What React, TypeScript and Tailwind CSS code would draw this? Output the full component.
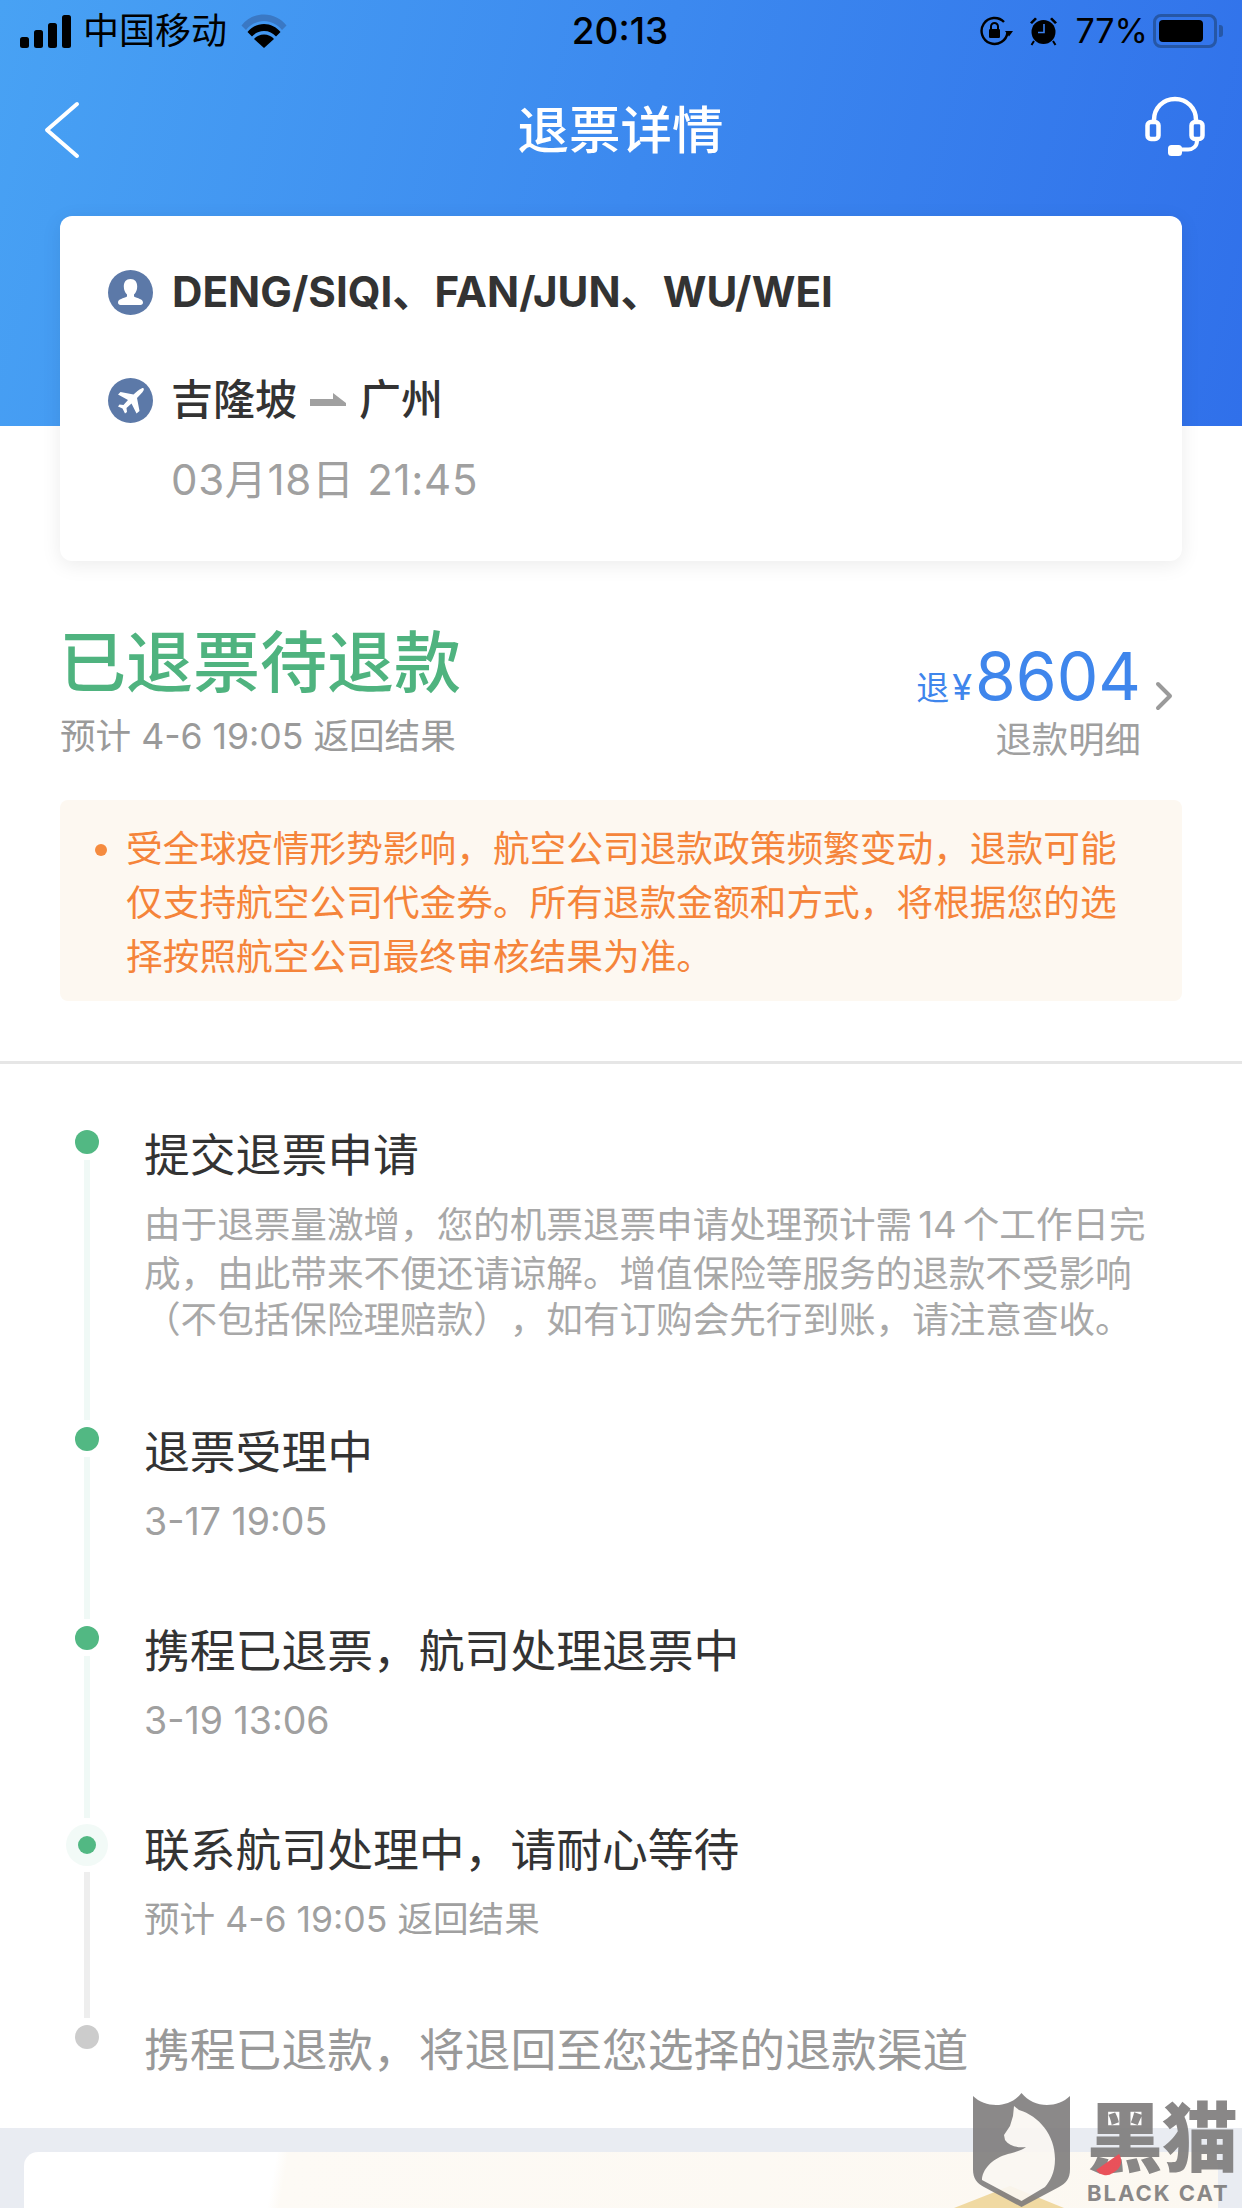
import React from "react";

const FONT = { fontFamily: '"Inter","Noto Sans CJK SC",sans-serif' };

function Signal() {
  return (
    <svg width="52" height="33" viewBox="0 0 52 33" className="shrink-0">
      <rect x="0" y="22" width="9" height="11" rx="2.5" fill="#000" />
      <rect x="14" y="15" width="9" height="18" rx="2.5" fill="#000" />
      <rect x="28" y="8" width="9" height="25" rx="2.5" fill="#000" />
      <rect x="42" y="0" width="9" height="33" rx="2.5" fill="#000" />
    </svg>
  );
}

function Wifi() {
  return (
    <svg width="46" height="34" viewBox="0 0 46 34" className="shrink-0">
      <path d="M0.5 11.5C6 4.5 14 0.5 23 0.5S40 4.5 45.5 11.5L41 16C36.5 10.5 30 7 23 7S9.5 10.5 5 16Z" fill="#3a78c4" />
      <path d="M6.5 18C10.5 13 16.5 10 23 10S35.5 13 39.5 18L35 22.5C32 19 27.8 17 23 17S14 19 11 22.5Z" fill="#000" />
      <path d="M13 25C15.5 22 19 20.5 23 20.5S30.5 22 33 25L23 34Z" fill="#000" />
    </svg>
  );
}

function RotationLock() {
  return (
    <svg width="34" height="30" viewBox="0 0 34 30" className="shrink-0">
      <path d="M27.5 16A13 13 0 1 1 24 5.5" fill="none" stroke="#000" strokeWidth="2.4" transform="translate(0,0.5)" />
      <path d="M25 15H33L29 20.5Z" fill="#000" />
      <rect x="9" y="13" width="11" height="9" rx="1.2" fill="#000" />
      <path d="M11 13V10.5a3.5 3.5 0 0 1 7 0V13" fill="none" stroke="#000" strokeWidth="2" />
    </svg>
  );
}

function Alarm() {
  return (
    <svg width="29" height="30" viewBox="0 0 29 30" className="shrink-0">
      <circle cx="14.5" cy="16" r="12" fill="#000" />
      <path d="M1 6.5L6 1.5 8 3 3 8ZM28 6.5L23 1.5 21 3 26 8Z" fill="#000" />
      <path d="M5 25L2.5 29M24 25L26.5 29" stroke="#000" strokeWidth="2" />
      <path d="M15 8V16.5H9" fill="none" stroke="#3a80ee" strokeWidth="1.6" />
    </svg>
  );
}

function Battery() {
  return (
    <div className="flex items-center shrink-0">
      <div className="w-[64px] h-[34px] rounded-[8px] border-[3px] border-[#2657a6] p-[3px] flex">
        <div className="w-[44px] h-full rounded-[4px] bg-black" />
      </div>
      <div className="w-[4px] h-[12px] ml-[2px] rounded-r-[3px] bg-[#2657a6]" />
    </div>
  );
}

function Headset() {
  return (
    <svg width="60" height="60" viewBox="0 0 60 60" className="shrink-0 -mt-[8px]">
      <path d="M9 26V24C9 12 18 3 30 3S51 12 51 24V26" fill="none" stroke="#fff" strokeWidth="4.5" />
      <rect x="2.5" y="26" width="11" height="17" rx="3.5" fill="none" stroke="#fff" strokeWidth="4.5" />
      <rect x="46.5" y="26" width="11" height="17" rx="3.5" fill="none" stroke="#fff" strokeWidth="4.5" />
      <path d="M52 43V45C52 50 48 53.5 43 53.5H30" fill="none" stroke="#fff" strokeWidth="4" />
      <rect x="23" y="49" width="14" height="11" rx="3.5" fill="#fff" />
    </svg>
  );
}

function PersonIcon() {
  return (
    <svg width="45" height="45" viewBox="0 0 45 45" className="shrink-0">
      <circle cx="22.5" cy="22.5" r="22.5" fill="#5c79a8" />
      <path d="M22.5 9C18 9 15.8 12 15.8 16.5C15.8 20 17 22.5 19 24.5V26.5C15.5 28.5 10 29 10 32.5C10 34 11 35 12.5 35H32.5C34 35 35 34 35 32.5C35 29 29.5 28.5 26 26.5V24.5C28 22.5 29.2 20 29.2 16.5C29.2 12 27 9 22.5 9Z" fill="#fff" />
    </svg>
  );
}

function PlaneIcon() {
  return (
    <svg width="45" height="45" viewBox="0 0 45 45" className="shrink-0">
      <circle cx="22.5" cy="22.5" r="22.5" fill="#5c79a8" />
      <path d="M33.5 10.5C35.5 9.5 36.5 10.5 35.5 12.5C34.5 14.5 31.5 17.5 29 20L31.5 33L28.5 35.5L23.5 25.5L18.5 30L19 34L17 35.5L14.5 30.5L10 28.5L11.5 26.5L15.5 27L20 22L10 16.5L12.5 14L25.5 16.5C28 14 31 11.5 33.5 10.5Z" fill="#fff" />
    </svg>
  );
}

function RouteArrow() {
  return (
    <svg width="36" height="14" viewBox="0 0 36 14" className="shrink-0">
      <path d="M0 6H23V0L36 10V13H0Z" fill="#a0a0a0" />
    </svg>
  );
}

function Watermark() {
  return (
    <div className="absolute left-[973px] top-[2093px] w-[269px] h-[115px] flex gap-[17px] opacity-90">
      <svg width="97" height="115" viewBox="0 0 97 115" className="shrink-0">
        <path d="M0 3C6 9 15 12 23 12C33 12 42 8 48.5 0C55 8 64 12 74 12C82 12 91 9 97 3V76C97 86 93 90 86 94L48.5 114L11 94C4 90 0 86 0 76Z" fill="#7f7d7d" />
        <path d="M41 13L46 17C66 23 82 42 82 66C82 80 77 88 72 94L48.5 108L9 87C9 77 19 66 32 62C38 60 48 58 53 54C44 55 36 53 32 47L31 42L37 33L40 23Z" fill="#faf7f2" />
      </svg>
      <div className="flex flex-col">
        <div className="text-[76px] leading-[80px] font-black text-[#7d7b7b] tracking-[-1px] whitespace-nowrap" style={{ fontFamily: '"Noto Sans CJK SC",sans-serif' }}>黑猫</div>
        <div className="mt-[10px] text-[22px] leading-[20px] font-bold text-[#7d7b7b] tracking-[2px] whitespace-nowrap">BLACK CAT</div>
      </div>
      <div className="absolute left-[124px] top-[68px] w-[28px] h-[12px] rounded-b-full bg-[#e8404a] rotate-[-35deg]" />
    </div>
  );
}

type Step = { title: string; sub?: string; subSize?: string; desc?: { t: string; c: string }[]; state: "done" | "active" | "todo"; line?: string; h: string };

function Dot({ state }: { state: Step["state"] }) {
  if (state === "active") {
    return (
      <div className="w-[42px] h-[42px] rounded-full bg-[#f2faf7] flex items-center justify-center">
        <div className="w-[18px] h-[18px] rounded-full bg-[#52b883]" />
      </div>
    );
  }
  return <div className={state === "done" ? "w-[24px] h-[24px] mt-[1px] rounded-full bg-[#52b883]" : "w-[24px] h-[24px] mt-[1px] rounded-full bg-[#cccccc]"} />;
}

function TimelineRow({ step }: { step: Step }) {
  return (
    <div className={"flex " + step.h}>
      <div className="w-[42px] ml-[66px] flex flex-col items-center">
        <Dot state={step.state} />
        {step.line && <div className={"w-[6px] flex-1 mt-[6px] mb-[6px] " + step.line} />}
      </div>
      <div className="ml-[36px]">
        <div className={step.state === "todo" ? "-mt-[2px] text-[45.8px] leading-[58px] text-[#999999] whitespace-nowrap" : "-mt-[2px] text-[45.8px] leading-[58px] text-[#333333] whitespace-nowrap"}>{step.title}</div>
        {step.desc && (
          <div className="mt-[15px] text-[36.6px] text-[#a8a8a8] whitespace-nowrap [text-spacing-trim:space-all]">
            {step.desc.map((l) => (
              <div key={l.t} className={l.c}>{l.t}</div>
            ))}
          </div>
        )}
        {step.sub && <div className={"mt-[18px] leading-[44px] text-[#a0a0a0] whitespace-nowrap " + step.subSize}>{step.sub}</div>}
      </div>
    </div>
  );
}

const steps: Step[] = [
  {
    title: "提交退票申请",
    desc: [
      { t: "由于退票量激增，您的机票退票申请处理预计需\u200614\u2006个工作日完", c: "leading-[51px]" },
      { t: "成，由此带来不便还请谅解。增值保险等服务的退款不受影响", c: "leading-[46px]" },
      { t: "（不包括保险理赔款），如有订购会先行到账，请注意查收。", c: "leading-[46px]" },
    ],
    state: "done",
    line: "bg-[#f0f9f6]",
    h: "h-[297px]",
  },
  { title: "退票受理中", sub: "3-17 19:05", subSize: "text-[37.5px]", state: "done", line: "bg-[#f0f9f6]", h: "h-[199px]" },
  { title: "携程已退票，航司处理退票中", sub: "3-19 13:06", subSize: "text-[37.5px]", state: "done", line: "bg-[#f0f9f6]", h: "h-[199px]" },
  { title: "联系航司处理中，请耐心等待", sub: "预计 4-6 19:05 返回结果", subSize: "text-[35.6px]", state: "active", line: "bg-[#eeeeee]", h: "h-[200px]" },
  { title: "携程已退款，将退回至您选择的退款渠道", state: "todo", h: "h-[90px]" },
];

export default function App() {
  return (
    <div className="relative w-[1242px] h-[2208px] overflow-hidden bg-white" style={FONT}>
      <div className="h-[426px] bg-[linear-gradient(105deg,#48a2f4,#3070ea)]">
        <div className="h-[60px] pt-[13px] pl-[20px] pr-[15px] flex items-start text-black">
          <div className="w-[405px] flex items-center">
            <Signal />
            <span className="ml-[11px] text-[36px] leading-[36px] whitespace-nowrap">中国移动</span>
            <span className="ml-[14px]"><Wifi /></span>
          </div>
          <div className="w-[390px] text-center text-[37px] leading-[36px] font-medium whitespace-nowrap">20:13</div>
          <div className="flex-1 flex items-center justify-end pr-[4px]">
            <RotationLock />
            <span className="ml-[15px]"><Alarm /></span>
            <span className="ml-[17px] text-[34px] leading-[36px] whitespace-nowrap">77%</span>
            <span className="ml-[5px]"><Battery /></span>
          </div>
        </div>
        <div className="h-[102px] mt-[19px] pl-[44px] pr-[37px] flex items-center justify-between">
          <svg width="36" height="58" viewBox="0 0 36 58" className="shrink-0">
            <path d="M33 3L3 29L33 55" fill="none" stroke="#fff" strokeWidth="4" strokeLinecap="round" strokeLinejoin="round" />
          </svg>
          <div className="ml-[16px] text-[51.5px] leading-[60px] font-medium text-white whitespace-nowrap">退票详情</div>
          <Headset />
        </div>
      </div>

      <div className="relative -mt-[210px] mx-[60px] h-[345px] rounded-[12px] bg-white shadow-[0_4px_20px_rgba(0,0,0,0.08)] pl-[48px] pt-[54px]">
        <div className="flex items-center gap-[19px] h-[44px]">
          <PersonIcon />
          <span className="text-[42.2px] leading-[44px] font-bold text-[#333333] whitespace-nowrap">DENG/SIQI、FAN/JUN、WU/WEI</span>
        </div>
        <div className="flex items-center gap-[19px] h-[44px] mt-[64px]">
          <PlaneIcon />
          <div className="flex items-center gap-[13px] text-[42px] leading-[44px] font-medium text-[#333333] whitespace-nowrap">
            <span className="-ml-[1px]">吉隆坡</span>
            <RouteArrow />
            <span>广州</span>
          </div>
        </div>
        <div className="ml-[63px] mt-[34px] text-[42px] tracking-[0.7px] leading-[48px] text-[#a0a0a0] whitespace-nowrap">03月18日 21:45</div>
      </div>

      <div className="mx-[60px] mt-[60px] h-[179px] flex items-start justify-between">
        <div>
          <div className="-ml-[1px] mt-[3px] text-[67px] leading-[78px] font-medium text-[#4fb37f] whitespace-nowrap">已退票待退款</div>
          <div className="mt-[13px] text-[35.6px] leading-[44px] text-[#9a9a9a] whitespace-nowrap">预计 4-6 19:05 返回结果</div>
        </div>
        <div className="flex items-start mr-[9px]">
          <div className="flex flex-col items-end mt-[20px]">
            <div className="flex items-baseline text-[#3f86ec] whitespace-nowrap">
              <span className="text-[33px] leading-[70px]">退</span>
              <span className="ml-[3px] text-[36px] leading-[70px]">¥</span>
              <span className="ml-[3px] text-[66px] leading-[70px]">8604</span>
            </div>
            <div className="-mt-[5px] text-[36.4px] leading-[44px] text-[#a0a0a0] whitespace-nowrap">退款明细</div>
          </div>
          <svg width="18" height="30" viewBox="0 0 18 30" className="ml-[14px] mt-[60px] shrink-0">
            <path d="M3 3L15 15L3 27" fill="none" stroke="#9a9a9a" strokeWidth="4" strokeLinecap="round" strokeLinejoin="round" />
          </svg>
        </div>
      </div>

      <div className="mx-[60px] h-[201px] rounded-[8px] bg-[#fdf8f1] pt-[22px] pl-[35px] flex items-start">
        <div className="w-[12px] h-[12px] mt-[22px] rounded-full bg-[#f58b3f] shrink-0" />
        <div className="ml-[19px] text-[36.7px] leading-[54px] text-[#f5843a] whitespace-nowrap">
          <div>受全球疫情形势影响，航空公司退款政策频繁变动，退款可能</div>
          <div>仅支持航空公司代金券。所有退款金额和方式，将根据您的选</div>
          <div>择按照航空公司最终审核结果为准。</div>
        </div>
      </div>

      <div className="mt-[60px] h-[3px] bg-[#e6e6e6]" />

      <div className="pt-[65px]">
        {steps.map((s) => (
          <TimelineRow key={s.title} step={s} />
        ))}
      </div>

      <div className="absolute left-0 right-0 bottom-0 h-[80px] bg-[#e9ecf2] pt-[24px] pl-[24px] pr-[24px]">
        <div className="relative h-[56px] rounded-t-[14px] overflow-hidden bg-[linear-gradient(100deg,#ffffff_0%,#ffffff_21%,#fdfaf5_22%,#fcf8f1_100%)]">
          <svg width="1194" height="56" viewBox="0 0 1194 56" className="absolute inset-0">
            <path d="M930 56L986 34L1040 56Z" fill="#f0d9a2" />
          </svg>
        </div>
      </div>

      <Watermark />
    </div>
  );
}
